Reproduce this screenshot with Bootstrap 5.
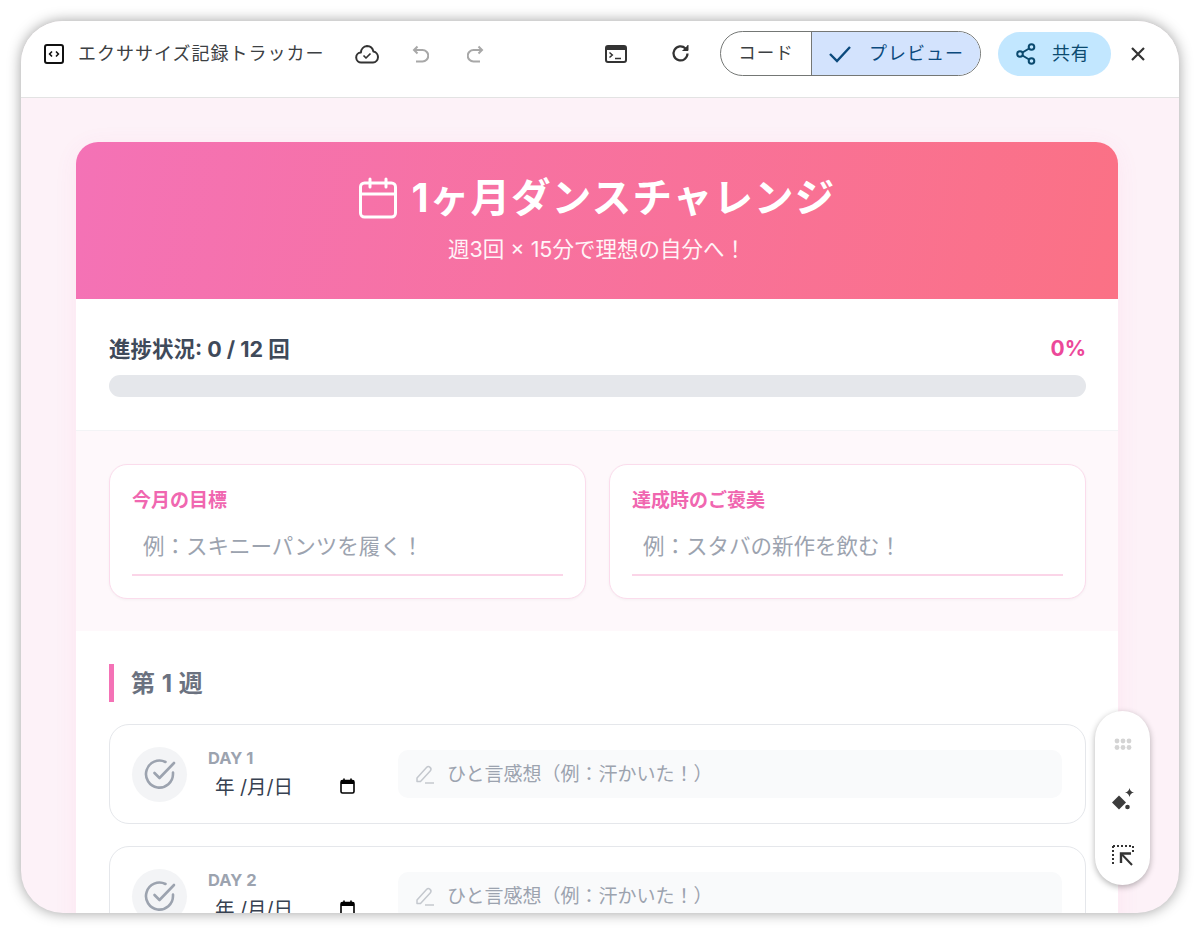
<!DOCTYPE html>
<html lang="ja">
<head>
  <meta charset="UTF-8"/>
  <meta name="viewport" content="width=device-width, initial-scale=1.0"/>
  <title>エクササイズ記録トラッカー</title>
  <link rel="stylesheet" href="https://cdn.jsdelivr.net/npm/bootstrap@5.3.0/dist/css/bootstrap.min.css"/>
  <style>
    html, body { height: 100%; overflow: hidden; background: #fff; }
    body { font-family: Inter, "Noto Sans CJK JP", sans-serif; padding: 21px; }
    .app-window {
      height: 892px; border-radius: 42px; overflow: hidden; position: relative;
      background: #fdf2f8; box-shadow: 0 0 14px rgba(0,0,0,.38);
    }
    /* top toolbar */
    .top-bar { height: 77px; flex: none; background: #fff; border-bottom: 1px solid #e3e3e3; padding: 0 29px 11px 23px; }
    .app-title { font-size: 18px; letter-spacing: 1px; color: #3c4043; margin-left: 14px; width: 254px; white-space: nowrap; }
    .tool-ico { flex: none; display: block; }
    .ms-cloud { margin-left: 23px; }
    .ms-undo { margin-left: 33px; }
    .ms-redo { margin-left: 38px; }
    .ms-term { margin-left: 121px; }
    .ms-reload { margin-left: 44px; }
    .seg-wrap { margin-left: 30px; height: 45px; width: 261px; border: 1px solid #747775; border-radius: 23px; overflow: hidden; }
    .seg-code { width: 91px; border-right: 1px solid #747775; font-size: 17.5px; color: #3c4043; letter-spacing: 1px; }
    .seg-preview { flex: 1; background: #d3e3fd; color: #0b4a7d; font-size: 18px; letter-spacing: 1px; gap: 17px; }
    .share-btn { margin-left: 17px; width: 113px; height: 44px; border-radius: 22px; background: #c2e7ff; color: #0b4a6f; font-size: 18px; letter-spacing: .8px; gap: 16px; padding-left: 18px; }
    .ms-close { margin-left: 20px; }
    /* page */
    .page-area { flex: 1; min-height: 0; padding: 44px 61px 0 55px; overflow: hidden; }
    .tracker-card { background: #fff; border-radius: 22px; box-shadow: 0 4px 24px rgba(236,72,153,.07); overflow: hidden; }
    .tracker-head { height: 157px; background: linear-gradient(100deg, #f472b6, #fb7185); color: #fff; padding-top: 29px; }
    .tracker-title { font-size: 39.5px; font-weight: 700; line-height: 54px; letter-spacing: 1.2px; margin: 0; gap: 13px; }
    .tracker-sub { font-size: 21.5px; line-height: 30px; margin-top: 9px; opacity: .92; }
    .progress-zone { height: 132px; padding: 34px 32px 0 33px; border-bottom: 1px solid #f3f4f6; }
    .progress-label { font-size: 21.5px; font-weight: 700; color: #3f4a5a; line-height: 32px; }
    .progress-pct { font-size: 21px; font-weight: 700; color: #ec4899; line-height: 32px; }
    .progress-track { height: 22px; border-radius: 11px; background: #e5e7eb; margin-top: 10px; }
    .goal-zone { height: 200px; background: #fef8fb; padding: 33px 32px 0 33px; gap: 23px; }
    .goal-box { flex: 1; height: 135px; background: #fff; border: 1.5px solid #fbdcec; border-radius: 18px; padding: 23px 22px 0; box-shadow: 0 1px 3px rgba(0,0,0,.04); }
    .goal-label { font-size: 19px; font-weight: 700; color: #f067b0; line-height: 26px; }
    .goal-input { width: 100%; height: 57px; margin-top: 5px; padding: 0 11px 2px; border: 0; border-bottom: 2px solid #fbd5e8; background: transparent; font-size: 21.5px; outline: 0; }
    .goal-input::placeholder { color: #9ca3af; opacity: 1; }
    .week-zone { padding: 33px 32px 0 33px; }
    .week-head { height: 38px; border-left: 5px solid #f472b6; padding-left: 17px; font-size: 24px; font-weight: 700; color: #6b7280; line-height: 40px; letter-spacing: .5px; }
    .day-row { height: 100px; border: 1.5px solid #e5e7eb; border-radius: 20px; padding: 0 23px 0 22px; margin-top: 22px; }
    .check-circle { width: 55px; height: 55px; flex: none; border-radius: 50%; background: #f3f4f6; }
    .day-info { width: 190px; margin-left: 21px; flex: none; padding-top: 2px; }
    .day-name { font-size: 16.5px; font-weight: 700; color: #9ca3af; line-height: 18px; }
    .day-date { font-size: 19.5px; color: #374151; line-height: 28px; padding-left: 7px; width: 147px; margin-top: 6px; }
    .date-ico { margin-top: -2px; }
    .note-box { flex: 1; height: 48px; background: #f9fafb; border-radius: 10px; padding-left: 17px; gap: 12px; }
    .note-input { flex: 1; border: 0; background: transparent; font-size: 19px; outline: 0; padding: 2px 0 0; }
    .note-input::placeholder { color: #9ca3af; opacity: 1; }
    /* floating palette */
    .float-tools {
      position: absolute; left: 1074px; top: 690px; width: 55px; height: 174px;
      background: #fff; border-radius: 28px; box-shadow: 0 2px 6px rgba(0,0,0,.3);
      padding-top: 27px;
    }
    .ft-spark { margin-top: 38px; }
    .ft-select { margin-top: 33px; }
  </style>
</head>
<body>
  <div class="app-window d-flex flex-column">
    <header class="top-bar d-flex align-items-center">
      <svg class="tool-ico" width="20" height="20" viewBox="0 0 20 20" fill="none" stroke="#111" stroke-width="2"><rect x="1" y="1" width="18" height="18" rx="2"/><path d="M8 7.500 5.600 10 8 12.500M12 7.500l2.400 2.500-2.400 2.500" stroke-width="1.600"/></svg>
      <span class="app-title">エクササイズ記録トラッカー</span>
      <svg class="tool-ico ms-cloud" width="24" height="20" viewBox="0 0 24 20" fill="none" stroke="#333" stroke-width="2" stroke-linejoin="round"><path d="M6.500 18.500a5 5 0 0 1-.6-10A6.800 6.800 0 0 1 12 2a6.800 6.800 0 0 1 6.400 5.600 5.500 5.500 0 0 1-.4 10.900z"/><path d="m8.500 11.500 2.500 2.500 4.500-4.500" stroke-width="1.700"/></svg>
      <svg class="tool-ico ms-undo" width="17" height="18" viewBox="0 0 17 18" fill="none" stroke="#a8a8a8" stroke-width="2"><path d="M5.500 1.500 2 5l3.500 3.500M2 5h8.500a4.800 4.800 0 0 1 0 11.500H4"/></svg>
      <svg class="tool-ico ms-redo" width="17" height="18" viewBox="0 0 17 18" fill="none" stroke="#a8a8a8" stroke-width="2"><path d="M11.500 1.500 15 5l-3.500 3.500M15 5H6.500a4.800 4.800 0 0 0 0 11.500H13"/></svg>
      <svg class="tool-ico ms-term" width="22" height="18" viewBox="0 0 22 18" fill="none"><rect x="1" y="1" width="20" height="16" rx="2" stroke="#333" stroke-width="2"/><rect x="1" y="1" width="20" height="4" fill="#333"/><path d="m4.500 7.500 2.800 2.500-2.800 2.500" stroke="#333" stroke-width="1.500"/><path d="M10 13.500h6" stroke="#333" stroke-width="1.500"/></svg>
      <svg class="tool-ico ms-reload" width="19" height="19" viewBox="0 0 19 19" fill="none" stroke="#333" stroke-width="2.200"><path d="M16.500 9.500a7 7 0 1 1-2-5"/><path d="M17 1v5.500h-5.500" fill="#333" stroke-width="1"/></svg>
      <div class="seg-wrap d-flex">
        <div class="seg-code d-flex align-items-center justify-content-center">コード</div>
        <div class="seg-preview d-flex align-items-center justify-content-center">
          <svg width="24" height="18" viewBox="0 0 24 18" fill="none" stroke="#0b4a7d" stroke-width="2.400"><path d="m2 9 7 7L22 2"/></svg>
          <span>プレビュー</span>
        </div>
      </div>
      <div class="share-btn d-flex align-items-center">
        <svg width="20" height="22" viewBox="0 0 20 22" fill="none" stroke="#0b4a6f" stroke-width="2"><circle cx="15.500" cy="4" r="2.800"/><circle cx="4" cy="11" r="2.800"/><circle cx="15.500" cy="18" r="2.800"/><path d="m6.500 9.500 6.600-4M6.500 12.500l6.600 4"/></svg>
        <span>共有</span>
      </div>
      <svg class="tool-ico ms-close" width="14" height="14" viewBox="0 0 14 14" fill="none" stroke="#333" stroke-width="2.200"><path d="m1 1 12 12M13 1 1 13"/></svg>
    </header>

    <main class="page-area">
      <div class="tracker-card">
        <div class="tracker-head text-center">
          <h1 class="tracker-title d-flex justify-content-center align-items-center">
            <svg width="40" height="42" viewBox="0 0 40 42" fill="none" stroke="#fff" stroke-width="3" stroke-linecap="round"><rect x="2.500" y="6" width="35" height="34" rx="4"/><path d="M2.500 17h35M12 2v8M28 2v8"/></svg>
            <span>1ヶ月ダンスチャレンジ</span>
          </h1>
          <div class="tracker-sub">週3回 × 15分で理想の自分へ！</div>
        </div>

        <div class="progress-zone">
          <div class="d-flex justify-content-between">
            <span class="progress-label">進捗状況: 0 / 12 回</span>
            <span class="progress-pct">0%</span>
          </div>
          <div class="progress-track"></div>
        </div>

        <div class="goal-zone d-flex">
          <div class="goal-box">
            <div class="goal-label">今月の目標</div>
            <input class="goal-input d-block" type="text" placeholder="例：スキニーパンツを履く！"/>
          </div>
          <div class="goal-box">
            <div class="goal-label">達成時のご褒美</div>
            <input class="goal-input d-block" type="text" placeholder="例：スタバの新作を飲む！"/>
          </div>
        </div>

        <div class="week-zone">
          <div class="week-head">第 1 週</div>
          <div class="day-row d-flex align-items-center">
            <div class="check-circle d-flex align-items-center justify-content-center">
              <svg width="32" height="32" viewBox="0 0 32 32" fill="none" stroke="#9ca3af" stroke-width="2.600" stroke-linecap="round" stroke-linejoin="round"><path d="M29 14.500V16A13.500 13.500 0 1 1 21.500 4"/><path d="m10.500 15 5 5L30 5"/></svg>
            </div>
            <div class="day-info">
              <div class="day-name">DAY 1</div>
              <div class="day-date d-flex justify-content-between align-items-center">
                <span>年 /月/日</span>
                <svg class="date-ico" width="15" height="16" viewBox="0 0 15 16" fill="none"><rect x="1" y="2.500" width="13" height="12.500" rx="1.500" stroke="#000" stroke-width="1.600"/><rect x="1" y="2.500" width="13" height="3.500" fill="#000"/><path d="M4 .5v3M11 .5v3" stroke="#000" stroke-width="1.600"/></svg>
              </div>
            </div>
            <div class="note-box d-flex align-items-center">
              <svg width="20" height="20" viewBox="0 0 20 20" fill="none" stroke="#c4c8ce" stroke-width="1.500" stroke-linejoin="round"><path d="m2 14 9.500-10.500a2.500 2.500 0 0 1 3.700 3.400L5.500 17.500H2z"/><path d="M10 19h9"/></svg>
              <input class="note-input" type="text" placeholder="ひと言感想（例：汗かいた！）"/>
            </div>
          </div>
          <div class="day-row d-flex align-items-center">
            <div class="check-circle d-flex align-items-center justify-content-center">
              <svg width="32" height="32" viewBox="0 0 32 32" fill="none" stroke="#9ca3af" stroke-width="2.600" stroke-linecap="round" stroke-linejoin="round"><path d="M29 14.500V16A13.500 13.500 0 1 1 21.500 4"/><path d="m10.500 15 5 5L30 5"/></svg>
            </div>
            <div class="day-info">
              <div class="day-name">DAY 2</div>
              <div class="day-date d-flex justify-content-between align-items-center">
                <span>年 /月/日</span>
                <svg class="date-ico" width="15" height="16" viewBox="0 0 15 16" fill="none"><rect x="1" y="2.500" width="13" height="12.500" rx="1.500" stroke="#000" stroke-width="1.600"/><rect x="1" y="2.500" width="13" height="3.500" fill="#000"/><path d="M4 .5v3M11 .5v3" stroke="#000" stroke-width="1.600"/></svg>
              </div>
            </div>
            <div class="note-box d-flex align-items-center">
              <svg width="20" height="20" viewBox="0 0 20 20" fill="none" stroke="#c4c8ce" stroke-width="1.500" stroke-linejoin="round"><path d="m2 14 9.500-10.500a2.500 2.500 0 0 1 3.700 3.400L5.500 17.500H2z"/><path d="M10 19h9"/></svg>
              <input class="note-input" type="text" placeholder="ひと言感想（例：汗かいた！）"/>
            </div>
          </div>
        </div>
      </div>
    </main>

    <div class="float-tools d-flex flex-column align-items-center">
      <svg width="18" height="12" viewBox="0 0 18 12" fill="#d4d4d4"><circle cx="3" cy="3" r="2.400"/><circle cx="9" cy="3" r="2.400"/><circle cx="15" cy="3" r="2.400"/><circle cx="3" cy="9.500" r="2.400"/><circle cx="9" cy="9.500" r="2.400"/><circle cx="15" cy="9.500" r="2.400"/></svg>
      <svg class="ft-spark" width="24" height="24" viewBox="0 0 24 24" fill="#3c3c3c"><path d="M8 7.500 15 14.500 8 21.500 1 14.500z"/><path d="M18.500 0c.6 2.700 1.800 3.900 4.500 4.500-2.700.6-3.900 1.800-4.500 4.500-.6-2.700-1.800-3.900-4.500-4.500 2.700-.6 3.900-1.800 4.500-4.500z"/><circle cx="16.500" cy="19" r="2.300"/></svg>
      <svg class="ft-select" width="22" height="21" viewBox="0 0 22 21" fill="none" stroke="#333" stroke-width="2"><path d="M1 1h19.500M1 1v19" stroke-dasharray="2 2"/><path d="M21 1v6" stroke-dasharray="2 2"/><path d="M20 20 10 9.500"/><path d="M9 18V8.500h10" stroke-width="2.400"/></svg>
    </div>
  </div>
</body>
</html>
